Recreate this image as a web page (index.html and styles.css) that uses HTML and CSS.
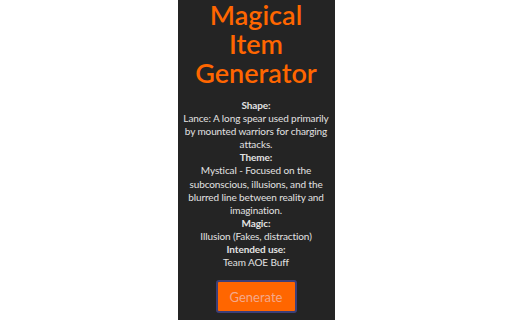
FILE: index.html
```html
<!DOCTYPE html>
<html>
<head>
<meta charset="utf-8">
<link rel="stylesheet" href="styles.css">
</head>
<body>
<main class="panel">
  <h1 class="title">Magical Item Generator</h1>
  <div class="info">
    <div class="label">Shape:</div>
    <div>Lance: A long spear used primarily by mounted warriors for charging attacks.</div>
    <div class="label">Theme:</div>
    <div>Mystical - Focused on the subconscious, illusions, and the blurred line between reality and imagination.</div>
    <div class="label">Magic:</div>
    <div>Illusion (Fakes, distraction)</div>
    <div class="label">Intended use:</div>
    <div>Team AOE Buff</div>
  </div>
  <button class="generate">Generate</button>
</main>
</body>
</html>
```
FILE: styles.css
```css
html, body {
  margin: 0;
  padding: 0;
  height: 100%;
  background: #ffffff;
}
body {
  display: flex;
  justify-content: center;
  font-family: Lato, "Open Sans", sans-serif;
  overflow: hidden;
}
.panel {
  width: 157px;
  height: 320px;
  background: #242424;
  color: #e2e2e2;
  text-align: center;
  padding: 0 4px;
  box-sizing: border-box;
  display: flex;
  flex-direction: column;
  align-items: center;
}
.title {
  margin: 0;
  font-size: 27px;
  line-height: 29px;
  font-weight: 600;
  color: #ff6600;
}
.info {
  margin-top: 12px;
  font-size: 10px;
  line-height: 13.1px;
  letter-spacing: -0.1px;
}
.label {
  font-weight: 700;
}
.generate {
  margin-top: 11px;
  width: 81px;
  height: 33px;
  background: #ff6600;
  border: 2px solid #3d3f78;
  border-radius: 3px;
  color: #f5a88a;
  font-family: Lato, "Open Sans", sans-serif;
  font-size: 13px;
  padding: 0;
}
```
